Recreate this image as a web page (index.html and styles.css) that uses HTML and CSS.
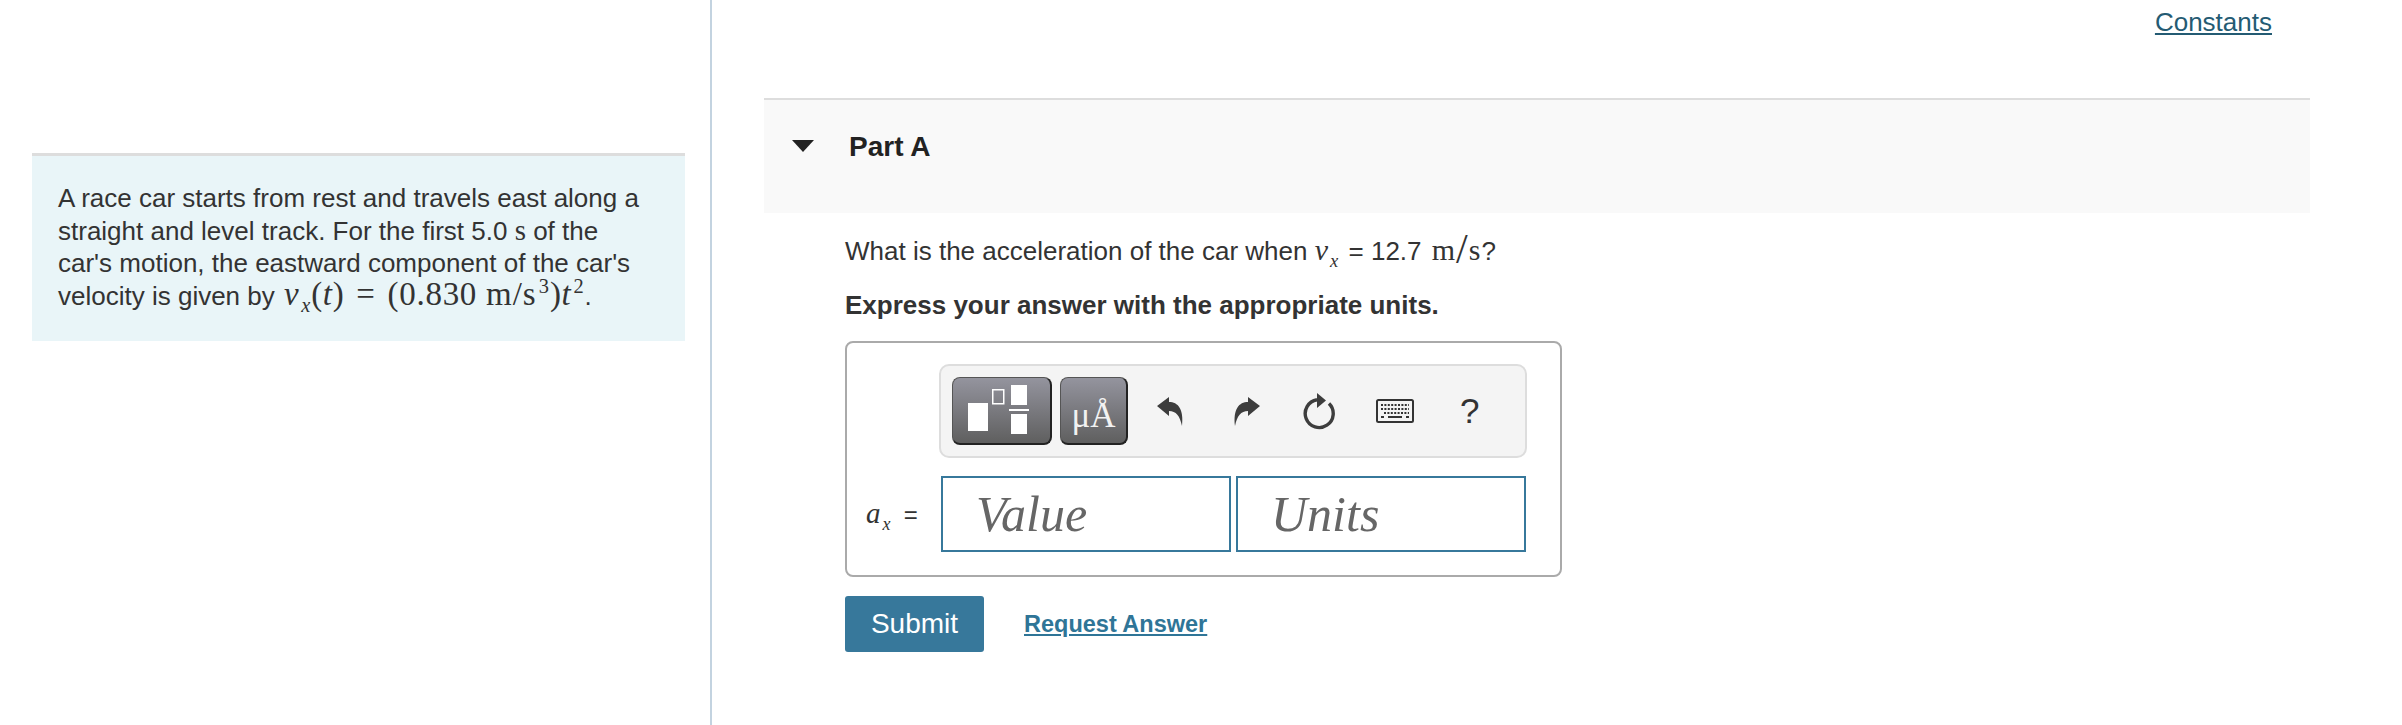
FILE: index.html
```html
<!DOCTYPE html>
<html lang="en">
<head>
    <meta charset="UTF-8">
    <title>Part A</title>
    <link rel="stylesheet" href="styles.css">
</head>
<body>
    <div class="intro-col">
        <div class="intro">
            A race car starts from rest and travels east along a straight and level track. For the first 5.0 <span class="unit">s</span> of the car's motion, the eastward component of the car's velocity is given by
            <span class="math big"><i>v<sub>x</sub></i>(<i>t</i>) <span class="eq-big">=</span> (0.830 <span class="wide">m/s<sup>3</sup></span>)<i>t</i><sup>2</sup></span>.
        </div>
    </div>

    <div class="main-col">
        <div class="constants-row"><a href="#" class="constants">Constants</a></div>

        <div class="part-head">
            <span class="caret"></span>
            <h2>Part A</h2>
        </div>

        <div class="part-body">
            <p class="question">What is the acceleration of the car when <span class="math q-math q-var"><i>v<sub>x</sub></i></span> = 12.7 <span class="math q-math q-unit wide">m<span class="slash">/</span>s</span>?</p>
            <p class="instruct">Express your answer with the appropriate units.</p>

            <div class="answer-box">
                <div class="toolbar">
                    <button class="tool tool-template">
                        <svg width="97" height="65" viewBox="1 1 97 65">
                            <rect x="16" y="26" width="20" height="28" fill="#fff"/>
                            <rect x="40.75" y="12.75" width="11" height="14" fill="none" stroke="#fff" stroke-width="1.5"/>
                            <rect x="59" y="8" width="16" height="20" fill="#fff"/>
                            <rect x="57" y="32" width="20" height="2" fill="#fff"/>
                            <rect x="59" y="37" width="16" height="20" fill="#fff"/>
                        </svg>
                    </button>
                    <button class="tool tool-symbol">μÅ</button>
                    <svg class="icon icon-undo" width="28" height="30" viewBox="0 0 28 30">
                        <path d="M1 10 L13 1 V6 C22 6 28 13 26 30 C24 20 20 15 13 15 V20 Z" fill="#3d3d3d"/>
                    </svg>
                    <svg class="icon icon-redo" width="28" height="30" viewBox="0 0 28 30">
                        <path d="M27 10 L15 1 V6 C6 6 0 13 2 30 C4 20 8 15 15 15 V20 Z" fill="#3d3d3d"/>
                    </svg>
                    <svg class="icon icon-reset" width="34" height="38" viewBox="0 0 34 38">
                        <path d="M15 7.7 A14 14 0 1 0 27 11.5" fill="none" stroke="#3d3d3d" stroke-width="3.4"/>
                        <path d="M15 1 L24 8.5 L15 16 Z" fill="#3d3d3d"/>
                    </svg>
                    <svg class="icon icon-keys" width="38" height="24" viewBox="0 0 38 24">
                        <rect x="1" y="1" width="36" height="22" rx="1.5" fill="none" stroke="#333" stroke-width="2"/>
                        <path d="M5 6 H33 M5 10 H33 M8 14 H33" stroke="#333" stroke-width="2" stroke-dasharray="2 1.4" fill="none"/>
                        <path d="M5 18 H8 M12 18 H26 M30 18 H33" stroke="#333" stroke-width="2" fill="none"/>
                    </svg>
                    <span class="help">?</span>
                </div>

                <div class="input-row">
                    <label class="math var-label"><i>a<sub>x</sub></i> <span class="eq">=</span></label>
                    <input class="field" type="text" placeholder="Value">
                    <input class="field" type="text" placeholder="Units">
                </div>
            </div>

            <div class="actions">
                <button class="submit">Submit</button>
                <a href="#" class="request">Request Answer</a>
            </div>
        </div>
    </div>
</body>
</html>
```

FILE: styles.css
```css
html, body {
    height: 100%;
}

body {
    margin: 0;
    display: flex;
    height: 725px;
    overflow: hidden;
    background: #fff;
    color: #333;
    font-family: "Liberation Sans", Arial, sans-serif;
    font-size: 26px;
    line-height: 32.5px;
}

.intro-col {
    width: 712px;
    flex: none;
    padding: 153px 25px 0 32px;
    box-sizing: border-box;
    border-right: 2px solid #c3d3e0;
}

.intro {
    background: #e9f5f8;
    border-top: 3px solid #ddd;
    padding: 26px 40px 27px 26px;
    height: 188px;
    box-sizing: border-box;
}

.math {
    font-family: "Liberation Serif", "Times New Roman", serif;
}

.big {
    font-size: 33px;
    line-height: 0;
    margin-left: 2px;
    letter-spacing: 0.7px;
}

.eq-big {
    margin: 0 3px;
}

.wide {
    letter-spacing: 1px;
}

.math sub,
.math sup {
    font-size: 62%;
    line-height: 0;
    margin-left: 2px;
}

.unit {
    font-family: "Liberation Serif", serif;
    font-size: 29px;
    line-height: 0;
}

.q-math {
    font-size: 30px;
    line-height: 0;
}

.q-var {
    margin-right: 3px;
}

.q-unit {
    margin-left: 3px;
}

.slash {
    font-size: 42px;
    line-height: 0;
    font-weight: normal;
    vertical-align: -3px;
}

.main-col {
    flex: 1;
    padding-left: 52px;
    padding-right: 92px;
}

.constants-row {
    height: 98px;
    display: flex;
    justify-content: flex-end;
    padding-right: 38px;
    box-sizing: border-box;
    padding-top: 6px;
}

.constants {
    color: #245b73;
}

.part-head {
    display: flex;
    align-items: flex-start;
    height: 115px;
    box-sizing: border-box;
    background: #f9f9f9;
    border-top: 2px solid #ddd;
    padding: 31px 0 0 28px;
}

.caret {
    width: 0;
    height: 0;
    margin-top: 9px;
    border-left: 11px solid transparent;
    border-right: 11px solid transparent;
    border-top: 12px solid #222;
}

.part-head h2 {
    margin: 0 0 0 35px;
    font-size: 28px;
    line-height: 32px;
    font-weight: bold;
    color: #222;
}

.part-body {
    padding-left: 81px;
}

.question {
    margin: 22px 0 0;
}

.instruct {
    margin: 21px 0 0;
    font-weight: bold;
}

.answer-box {
    width: 717px;
    height: 236px;
    box-sizing: border-box;
    margin-top: 20px;
    border: 2px solid #aaa;
    border-radius: 8px;
    padding: 21px 0 0 92px;
}

.toolbar {
    width: 588px;
    height: 94px;
    box-sizing: border-box;
    display: flex;
    align-items: center;
    background: #f4f4f4;
    border: 2px solid #ddd;
    border-radius: 10px;
    padding-left: 11px;
}

.tool {
    height: 68px;
    padding: 0;
    display: flex;
    align-items: center;
    justify-content: center;
    border: 1px solid #555;
    border-bottom: 2px solid #222;
    border-right: 2px solid #222;
    border-radius: 8px;
    background: linear-gradient(#94949e, #5f5f5f);
    color: #fff;
}

.tool-template {
    width: 100px;
}

.tool-symbol {
    width: 68px;
    margin-left: 8px;
    font-family: "Liberation Serif", serif;
    font-size: 35px;
    color: #f2f2f2;
    padding-top: 10px;
}

.icon {
    flex: none;
}

.icon-undo {
    margin-left: 28px;
}

.icon-redo {
    margin-left: 49px;
}

.icon-reset {
    margin-left: 41px;
}

.icon-keys {
    margin-left: 40px;
}

.help {
    margin-left: 46px;
    font-size: 35px;
    color: #333;
}

.input-row {
    display: flex;
    align-items: center;
    margin: 18px 0 0 -73px;
}

.var-label {
    width: 75px;
    flex: none;
    font-size: 29px;
}

.eq {
    font-family: "Liberation Sans", sans-serif;
    font-size: 24px;
    margin-left: 6px;
}

.field {
    width: 290px;
    height: 76px;
    box-sizing: border-box;
    margin-right: 5px;
    border: 2px solid #37789b;
    padding: 0 0 0 33px;
    font-family: "Liberation Serif", serif;
    font-style: italic;
    font-size: 50px;
    outline: none;
}

.field::placeholder {
    color: #666;
    opacity: 1;
}

.actions {
    display: flex;
    align-items: center;
    margin-top: 19px;
}

.submit {
    width: 139px;
    height: 56px;
    border: none;
    border-radius: 3px;
    background: #37789b;
    color: #fff;
    font-family: "Liberation Sans", sans-serif;
    font-size: 28px;
}

.request {
    margin-left: 40px;
    font-size: 23.5px;
    font-weight: bold;
    color: #2f7597;
}
```
